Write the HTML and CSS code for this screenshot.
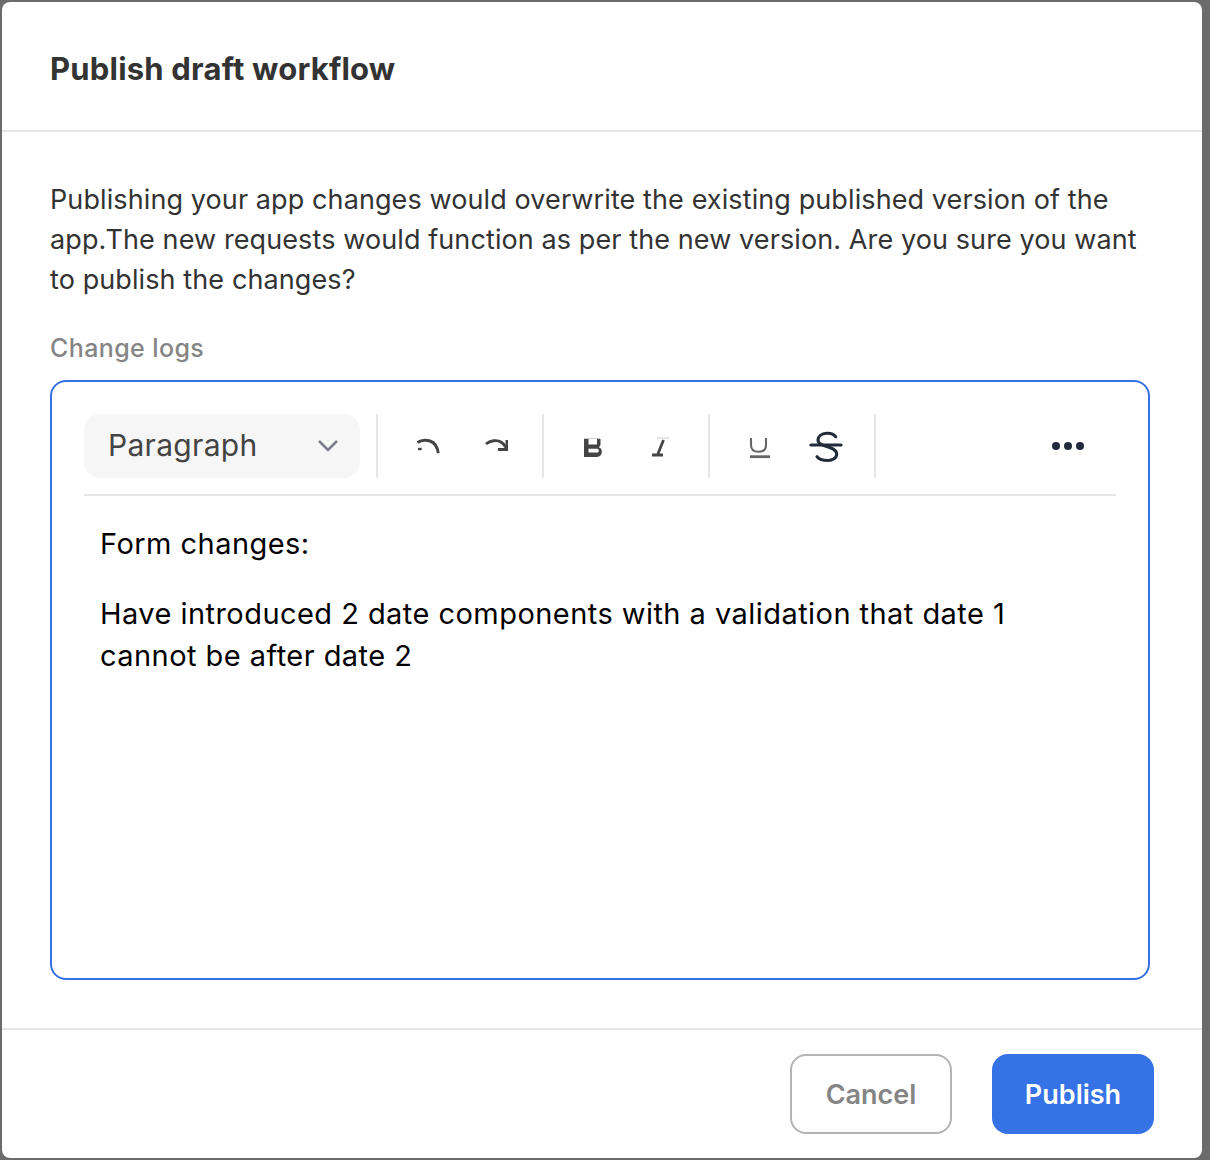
FILE: index.html
```html
<!DOCTYPE html>
<html>
<head>
    <meta charset="UTF-8">
    <meta name="viewport" content="width=device-width, initial-scale=1.0">
    <title>Publish draft workflow</title>
    <link rel="stylesheet" href="styles.css">
</head>
<body>
    <div class="modal">
        <div class="modal-header">
            <h2>Publish draft workflow</h2>
        </div>

        <div class="modal-body">
            <p class="message">Publishing your app changes would overwrite the existing published version of the app.The new requests would function as per the new version. Are you sure you want to publish the changes?</p>
            <div class="field-label">Change logs</div>

            <div class="editor">
                <div class="toolbar">
                    <div class="select">
                        <span>Paragraph</span>
                        <svg class="chevron" width="24" height="24" viewBox="0 0 24 24"><path d="M3 7l9 9 9-9" fill="none" stroke="#7b8088" stroke-width="2.6"/></svg>
                    </div>
                    <div class="tool-group">
                        <!-- undo -->
                        <svg class="tool" width="26" height="26" viewBox="0 0 26 26"><path d="M1.500 9.500C5 7 10 6.800 14 8c4.500 1.500 7.500 6 8.300 12.300" fill="none" stroke="#444" stroke-width="2.900"/><path d="M2 16h3.700" stroke="#444" stroke-width="2.400"/></svg>
                        <!-- redo -->
                        <svg class="tool" width="26" height="26" viewBox="0 0 26 26"><path d="M4 11c4-3.500 11-4.500 15-2 2.500 1.500 4 3.500 5.500 6" fill="none" stroke="#444" stroke-width="2.900"/><path d="M23.500 7h3v11H16v-3h7.500z" fill="#444"/></svg>
                    </div>
                    <div class="tool-group">
                        <!-- bold -->
                        <svg class="tool" width="26" height="26" viewBox="0 0 26 26"><path d="M2 5.500h16" stroke="#ccc" stroke-width="1"/><path fill-rule="evenodd" d="M2 6h4.500v5.500H15V6h3.500v5c0 1.500-.6 2.500-1.700 3.200 2 .7 3 2.200 3 4.300 0 3.300-2 5.500-5.500 5.500H2zM6.500 15.800v3.800H15c1.300 0 1.800-.9 1.800-1.900s-.5-1.900-1.800-1.900z" fill="#444"/></svg>
                        <!-- italic -->
                        <svg class="tool" width="26" height="26" viewBox="0 0 26 26"><path d="M9 5h12" stroke="#c8c8c8" stroke-width="1"/><path d="M4 22h11M15.500 7L9.500 22" fill="none" stroke="#444" stroke-width="2.800"/></svg>
                    </div>
                    <div class="tool-group">
                        <!-- underline -->
                        <svg class="tool" width="26" height="26" viewBox="0 0 26 26"><path d="M3 5v7c0 4.500 3 6.800 7.500 6.800S18 16.500 18 12V5" fill="none" stroke="#666" stroke-width="2.100"/><path d="M2 23.700h20" stroke="#666" stroke-width="2.800"/></svg>
                        <!-- strikethrough -->
                        <svg class="tool strike" width="34" height="34" viewBox="0 0 34 34"><path d="M26.700 7.700C24.500 5 21 4 17.700 4.300 12.500 4.700 9 7.500 9 11c0 3 2.500 4.500 6 5.500l7 2.500c3.500 1.500 5.700 3 5.700 6 0 4-4.200 6.500-8.700 6.500-4.500 0-9-1.500-11-3.800" fill="none" stroke="#222b3a" stroke-width="3.100" stroke-linecap="round"/><path d="M2 16h30" stroke="#222b3a" stroke-width="3.200" stroke-linecap="round"/></svg>
                    </div>
                    <div class="more"><i></i><i></i><i></i></div>
                </div>

                <div class="content">
                    <p>Form changes:</p>
                    <p>Have introduced 2 date components with a validation that date 1 cannot be after date 2</p>
                </div>
            </div>
        </div>

        <div class="modal-footer">
            <button class="btn btn-cancel">Cancel</button>
            <button class="btn btn-publish">Publish</button>
        </div>
    </div>
</body>
</html>
```

FILE: styles.css
```css
* {
    box-sizing: border-box;
}

html, body {
    height: 100%;
}

body {
    margin: 0;
    padding: 2px 8px 2px 2px;
    background-color: #6b6b6b;
    font-family: "Inter", "Liberation Sans", sans-serif;
    overflow: hidden;
}

.modal {
    height: 1156px;
    background: #fff;
    border-radius: 8px;
    display: flex;
    flex-direction: column;
}

.modal-header {
    height: 130px;
    padding: 5px 48px 0;
    display: flex;
    align-items: center;
    border-bottom: 2px solid #e6e6e6;
}

.modal-header h2 {
    margin: 0;
    font-size: 31px;
    font-weight: 700;
    letter-spacing: 0.2px;
    color: #333;
}

.modal-body {
    flex: 1;
    padding: 48px 52px 0 48px;
}

.message {
    margin: 0;
    font-size: 27px;
    line-height: 40px;
    letter-spacing: 0.1px;
    color: #333;
}

.field-label {
    margin-top: 28px;
    height: 40px;
    font-size: 25px;
    line-height: 40px;
    font-weight: 500;
    letter-spacing: 0.4px;
    color: #858585;
}

.editor {
    margin-top: 12px;
    height: 600px;
    border: 2px solid #3572e6;
    border-radius: 16px;
    padding: 32px;
}

.toolbar {
    height: 82px;
    display: flex;
    align-items: flex-start;
    border-bottom: 2px solid #e6e6e6;
}

.select {
    width: 276px;
    height: 64px;
    padding: 0 20px 2px 24px;
    background: #f6f6f6;
    border-radius: 16px;
    display: flex;
    align-items: center;
    justify-content: space-between;
    font-size: 30px;
    letter-spacing: 0.3px;
    color: #444;
}

.chevron {
    margin-bottom: -2px;
}

.tool-group {
    width: 166px;
    height: 64px;
    padding-left: 38px;
    display: flex;
    align-items: center;
    gap: 40px;
    border-right: 2px solid #e6e6e6;
}

.select + .tool-group {
    margin-left: 16px;
    border-left: 2px solid #e6e6e6;
    width: 168px;
}

.tool.strike {
    margin-left: -5px;
}

.more {
    margin-left: auto;
    margin-right: 32px;
    height: 64px;
    display: flex;
    align-items: center;
    gap: 4px;
}

.more i {
    width: 8px;
    height: 8px;
    border-radius: 50%;
    background: #222b3a;
}

.content {
    padding: 27px 16px;
    font-size: 29px;
    line-height: 42px;
    letter-spacing: 0.45px;
    color: #000;
}

.content p {
    margin: 0 0 28px;
}

.modal-footer {
    height: 130px;
    padding: 24px 48px 24px 0;
    border-top: 2px solid #e6e6e6;
    display: flex;
    justify-content: flex-end;
    gap: 40px;
}

.btn {
    width: 162px;
    height: 80px;
    border-radius: 16px;
    font-family: inherit;
    font-size: 27px;
    font-weight: 600;
}

.btn-cancel {
    background: #fff;
    border: 2px solid #b3b3b3;
    color: #858585;
}

.btn-publish {
    background: #3572e6;
    border: none;
    color: #fff;
}
```
